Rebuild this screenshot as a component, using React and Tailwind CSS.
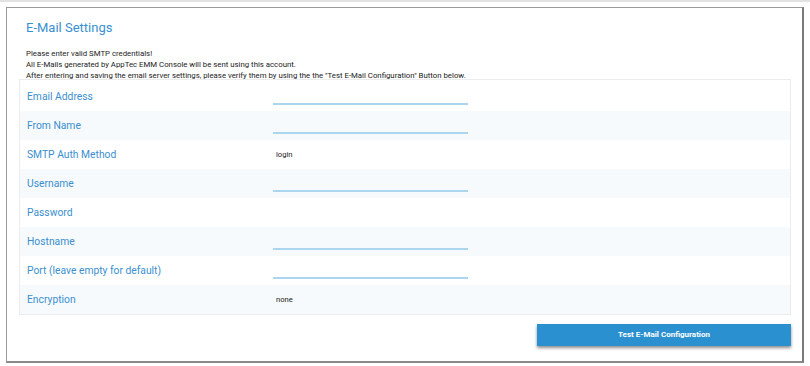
import React from 'react';

const fields = [
  { label: 'Email Address', type: 'input' },
  { label: 'From Name', type: 'input' },
  { label: 'SMTP Auth Method', type: 'text', value: 'login' },
  { label: 'Username', type: 'input' },
  { label: 'Password', type: 'empty' },
  { label: 'Hostname', type: 'input' },
  { label: 'Port (leave empty for default)', type: 'input' },
  { label: 'Encryption', type: 'text', value: 'none' },
];

export default function App() {
  return (
    <div className="w-[810px] h-[366px] bg-white border-t-2 border-[#e2e2e2] pt-[5px] pl-[6px] font-['Roboto',sans-serif]">
      <div className="w-[798px] h-[356px] border border-[#9a9a9a] border-r-2 border-b-2 border-r-[#7a7a7a] border-b-[#8a8a8a] px-3 pt-[10px]">
        <h2 className="pl-[7px] text-[13px] leading-[20px] text-[#3a8fcf]">E-Mail Settings</h2>

        <div className="pl-[7px] mt-[10px] text-[7.8px] leading-[11px] text-[#222]">
          <p>Please enter valid SMTP credentials!</p>
          <p>All E-Mails generated by AppTec EMM Console will be sent using this account.</p>
          <p>After entering and saving the email server settings, please verify them by using the the "Test E-Mail Configuration" Button below.</p>
        </div>

        <div className="-mt-[2px] w-[772px] border border-[#ececec] pt-[2px]">
          {fields.map((f, i) => (
            <div
              key={f.label}
              className={`flex items-center h-[29px] ${i % 2 === 1 ? 'bg-[#f6fafd]' : 'bg-white'}`}
            >
              <div className="w-[253px] pl-[7px] pt-[1px] text-[10.3px] text-[#3a8fcf]">{f.label}</div>
              {f.type === 'input' && (
                <div className="w-[195px] h-[29px] flex items-end pb-[6px]">
                  <div className="w-full h-[2px] bg-[#acd5ee]" />
                </div>
              )}
              {f.type === 'text' && (
                <div className="pl-[3px] pt-[1px] text-[7.6px] text-[#1a1a1a]">{f.value}</div>
              )}
            </div>
          ))}
        </div>

        <div className="flex justify-end mt-[9px] w-[772px]">
          <button className="w-[254px] h-[22px] bg-[#2a90d0] text-white text-[8px] font-bold shadow-[0_2px_3px_rgba(0,0,0,0.45)]">
            Test E-Mail Configuration
          </button>
        </div>
      </div>
    </div>
  );
}
